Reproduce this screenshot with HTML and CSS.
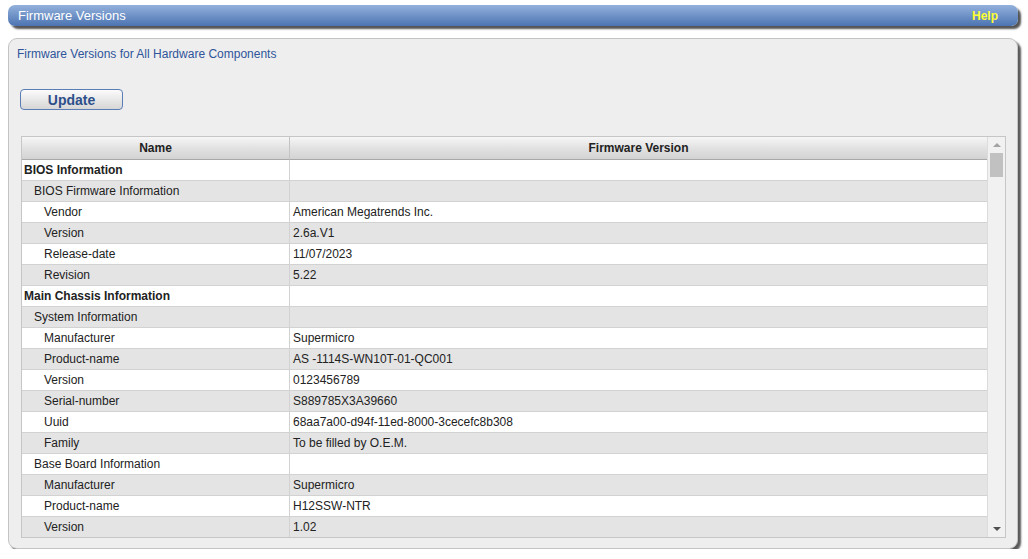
FILE: index.html
```html
<!DOCTYPE html>
<html lang="en">
<head>
    <meta charset="UTF-8">
    <title>Firmware Versions</title>
    <link rel="stylesheet" href="styles.css">
</head>
<body>
    <div class="page">
        <div class="titlebar">
            <span class="title">Firmware Versions</span>
            <span class="help">Help</span>
        </div>

        <div class="panel">
            <div class="panel-desc">Firmware Versions for All Hardware Components</div>
            <button class="update-btn">Update</button>

            <div class="grid-frame">
                <div class="grid-body">
                    <table class="fw-table">
                        <colgroup>
                            <col class="col-name">
                            <col>
                        </colgroup>
                        <thead>
                            <tr><th>Name</th><th>Firmware Version</th></tr>
                        </thead>
                        <tbody>
                            <tr><td class="lvl0">BIOS Information</td><td></td></tr>
                            <tr><td class="lvl1">BIOS Firmware Information</td><td></td></tr>
                            <tr><td class="lvl2">Vendor</td><td>American Megatrends Inc.</td></tr>
                            <tr><td class="lvl2">Version</td><td>2.6a.V1</td></tr>
                            <tr><td class="lvl2">Release-date</td><td>11/07/2023</td></tr>
                            <tr><td class="lvl2">Revision</td><td>5.22</td></tr>
                            <tr><td class="lvl0">Main Chassis Information</td><td></td></tr>
                            <tr><td class="lvl1">System Information</td><td></td></tr>
                            <tr><td class="lvl2">Manufacturer</td><td>Supermicro</td></tr>
                            <tr><td class="lvl2">Product-name</td><td>AS -1114S-WN10T-01-QC001</td></tr>
                            <tr><td class="lvl2">Version</td><td>0123456789</td></tr>
                            <tr><td class="lvl2">Serial-number</td><td>S889785X3A39660</td></tr>
                            <tr><td class="lvl2">Uuid</td><td>68aa7a00-d94f-11ed-8000-3cecefc8b308</td></tr>
                            <tr><td class="lvl2">Family</td><td>To be filled by O.E.M.</td></tr>
                            <tr><td class="lvl1">Base Board Information</td><td></td></tr>
                            <tr><td class="lvl2">Manufacturer</td><td>Supermicro</td></tr>
                            <tr><td class="lvl2">Product-name</td><td>H12SSW-NTR</td></tr>
                            <tr><td class="lvl2">Version</td><td>1.02</td></tr>
                        </tbody>
                    </table>
                </div>
                <div class="scrollbar">
                    <div class="sb-btn"><span class="arrow-up"></span></div>
                    <div class="sb-thumb"></div>
                    <div class="sb-track"></div>
                    <div class="sb-btn"><span class="arrow-down"></span></div>
                </div>
            </div>
        </div>
    </div>
</body>
</html>
```

FILE: styles.css
```css
body {
    margin: 0;
    background-color: #ffffff;
    font-family: "Liberation Sans", Arial, sans-serif;
    font-size: 12px;
    color: #222222;
}

.page {
    padding: 5px 10px 0 8px;
}

.titlebar {
    height: 21px;
    display: flex;
    justify-content: space-between;
    align-items: center;
    padding: 0 20px 0 10px;
    border-radius: 7px;
    background: linear-gradient(#93b1dc, #4c74b2);
    box-shadow: 3px 3px 2px #555555;
}

.title {
    color: #ffffff;
    font-size: 13px;
}

.help {
    color: #ffff33;
    font-size: 12px;
    font-weight: bold;
}

.panel {
    margin-top: 12px;
    height: 511px;
    box-sizing: border-box;
    padding: 8px 11px 0 8px;
    background-color: #eeeeee;
    border: 1px solid #c4c4c4;
    border-radius: 9px;
    box-shadow: 3px 3px 2px #5a5a5a;
}

.panel-desc {
    color: #2f559a;
    font-size: 12px;
    line-height: 14px;
}

.update-btn {
    display: block;
    margin: 28px 0 0 3px;
    width: 103px;
    height: 21px;
    padding: 0;
    font-family: "Liberation Sans", Arial, sans-serif;
    font-size: 14px;
    font-weight: bold;
    color: #2d4f8a;
    background: linear-gradient(#fbfbfb, #d6d6d6);
    border: 1px solid #5a7db5;
    border-radius: 4px;
}

.grid-frame {
    display: flex;
    margin: 26px 0 0 4px;
    height: 402px;
    box-sizing: border-box;
    border: 1px solid #c6c6c6;
    background-color: #ffffff;
}

.grid-body {
    flex: 1;
    overflow: hidden;
}

.fw-table {
    width: 100%;
    table-layout: fixed;
    border-collapse: separate;
    border-spacing: 0;
}

.col-name {
    width: 268px;
}

.fw-table th {
    height: 22px;
    padding: 0;
    font-size: 12px;
    font-weight: bold;
    color: #222222;
    background: linear-gradient(#f6f6f6, #e2e2e2 50%, #d3d3d3);
    border-bottom: 1px solid #a8a8a8;
    border-right: 1px solid #c4c4c4;
}

.fw-table td {
    height: 20px;
    padding: 0 0 0 3px;
    line-height: 20px;
    white-space: nowrap;
    border-bottom: 1px solid #d2d2d2;
    border-right: 1px solid #d2d2d2;
}

.fw-table th:last-child,
.fw-table td:last-child {
    border-right: none;
}

.fw-table tbody tr:nth-child(even) td {
    background-color: #e4e4e4;
}

.fw-table td.lvl0 {
    padding-left: 2px;
    font-weight: bold;
}

.fw-table td.lvl1 {
    padding-left: 12px;
}

.fw-table td.lvl2 {
    padding-left: 22px;
}

.scrollbar {
    width: 17px;
    display: flex;
    flex-direction: column;
    background-color: #f1f1f1;
    border-left: 1px solid #dcdcdc;
}

.sb-btn {
    height: 16px;
    display: flex;
    justify-content: center;
    align-items: center;
}

.sb-thumb {
    height: 24px;
    margin: 0 2px;
    background-color: #c1c1c1;
}

.sb-track {
    flex: 1;
}

.arrow-up {
    width: 0;
    height: 0;
    border-left: 4px solid transparent;
    border-right: 4px solid transparent;
    border-bottom: 4px solid #a3a3a3;
}

.arrow-down {
    width: 0;
    height: 0;
    border-left: 4px solid transparent;
    border-right: 4px solid transparent;
    border-top: 4px solid #505050;
}
```
